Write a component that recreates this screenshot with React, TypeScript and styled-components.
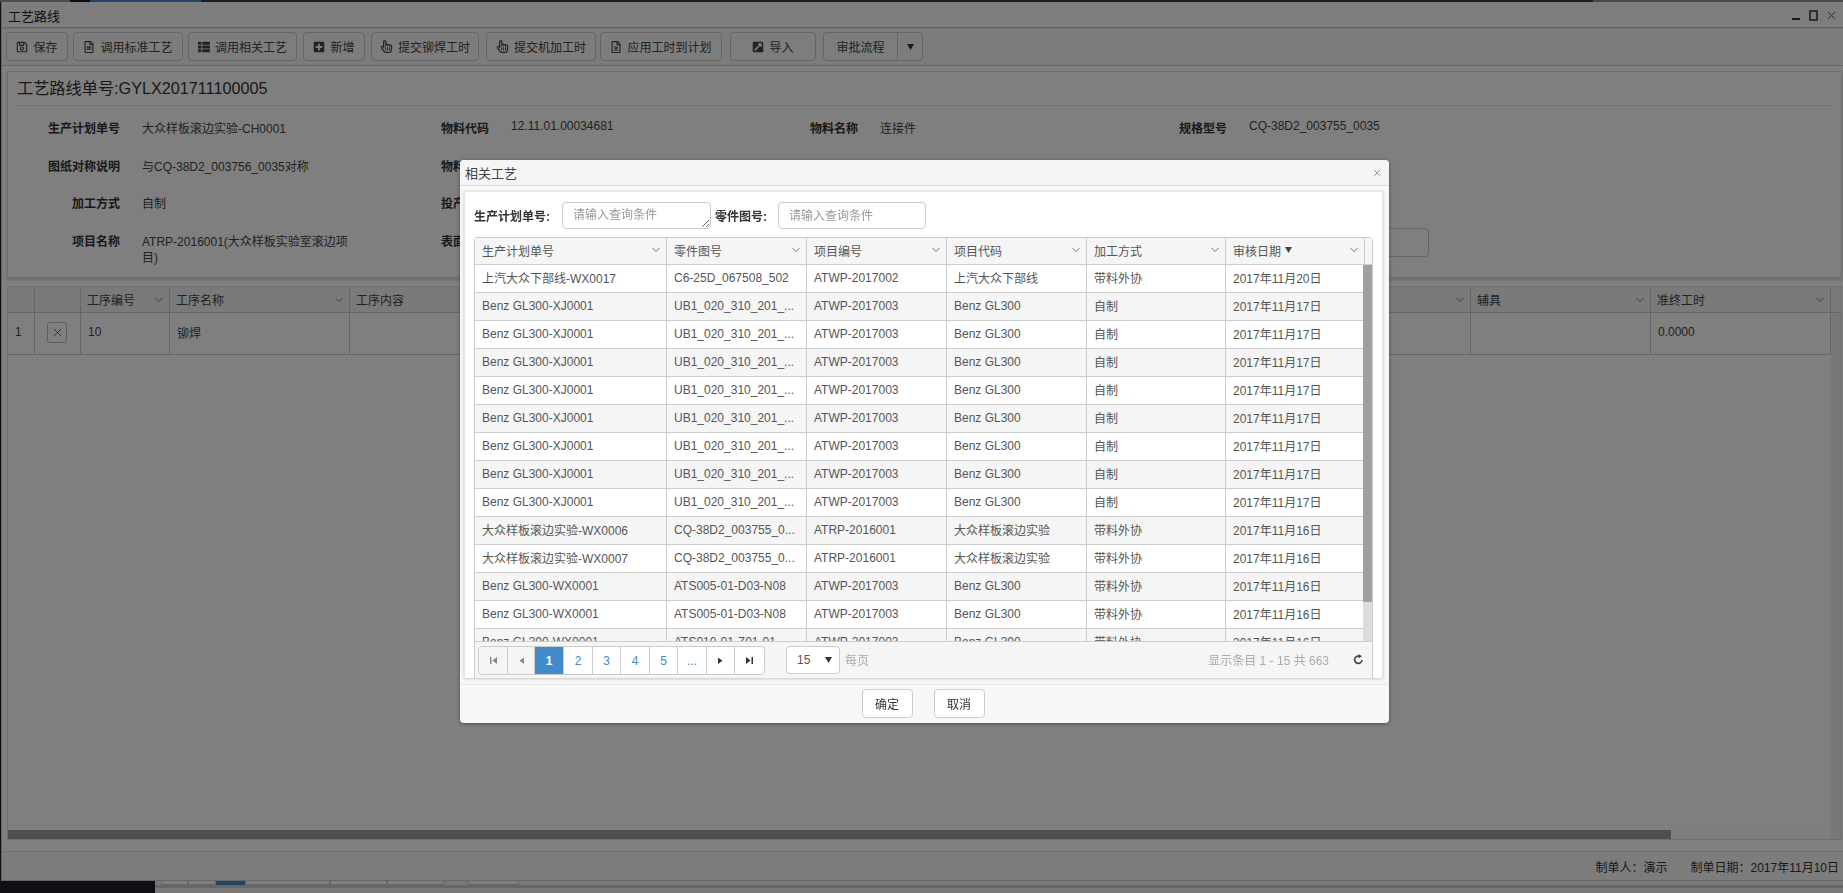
import React, { ReactElement } from 'react';
import styled, { createGlobalStyle } from 'styled-components';
import {
  FaRegSave,
  FaRegFileAlt,
  FaThList,
  FaPlusSquare,
  FaRegHandPointer,
  FaRegFileExcel,
  FaExternalLinkSquareAlt,
} from 'react-icons/fa';

const GlobalStyle = createGlobalStyle`
  html, body {
    margin: 0;
    padding: 0;
    width: 1843px;
    height: 893px;
    overflow: hidden;
    background: #1c1e24;
    font-family: "Liberation Sans", "Noto Sans CJK SC", sans-serif;
    font-size: 12px;
    color: #333;
  }
  * { box-sizing: border-box; }
`;

const Page = styled.div`
  width: 1843px;
  height: 893px;
  display: flex;
  flex-direction: column;
`;

const TopStrip = styled.div`
  height: 2px;
  display: flex;
  background: #3a3d48;
`;

const TopSegment = styled.div<{ $w: number; $c: string; $push?: boolean }>`
  width: ${(p) => p.$w}px;
  margin-left: ${(p) => (p.$push ? 'auto' : 0)};
  background: ${(p) => p.$c};
`;

const Window = styled.div`
  height: 879px;
  margin-left: 1px;
  display: flex;
  flex-direction: column;
  background: #fbfbfb;
  border-left: 1px solid #c8c8c8;
`;

const TitleBar = styled.div`
  height: 26px;
  flex: none;
  display: flex;
  align-items: center;
  justify-content: space-between;
  padding: 2px 7px 0 6px;
  font-size: 13px;
  border-bottom: 1px solid #ccc;
  color: #222;
`;

const WindowControls = styled.div`
  display: flex;
  align-items: center;
  gap: 9px;
  color: #333;
`;

const Toolbar = styled.div`
  height: 38px;
  flex: none;
  display: flex;
  align-items: center;
  padding: 0 0 1px 4px;
  border-top: 1px solid #e4e4e4;
  border-bottom: 1px solid #ccc;
  background: #f8f8f8;
`;

const ToolButton = styled.div<{ $w: number; $ml: number }>`
  width: ${(p) => p.$w}px;
  margin-left: ${(p) => p.$ml}px;
  height: 29px;
  display: flex;
  align-items: center;
  justify-content: center;
  gap: 5px;
  border: 1px solid #ccc;
  border-radius: 4px;
  background: #fafafa;
  color: #444;
  font-size: 12px;
  svg { font-size: 12px; }
`;

const HandIcon = styled(FaRegHandPointer)`
  && { font-size: 13px; }
`;

const SplitButton = styled.div`
  width: 100px;
  margin-left: 7px;
  height: 29px;
  display: flex;
  border: 1px solid #ccc;
  border-radius: 4px;
  background: #fafafa;
  color: #444;
`;

const SplitMain = styled.div`
  width: 74px;
  display: flex;
  align-items: center;
  justify-content: center;
  border-right: 1px solid #ccc;
`;

const SplitCaret = styled.div`
  flex: 1;
  display: flex;
  align-items: center;
  justify-content: center;
`;

const Content = styled.div`
  flex: 1;
  min-height: 0;
  display: flex;
  flex-direction: column;
  gap: 8px;
  padding: 5px 1px 11px 5px;
  background: #fff;
`;

const HeaderPanel = styled.div`
  height: 207px;
  flex: none;
  padding: 0 10px 0 9px;
  border: 1px solid #ddd;
  background: #fff;
  box-shadow: 0 2px 3px rgba(0, 0, 0, 0.15);
`;

const PanelTitle = styled.div`
  height: 34px;
  line-height: 33px;
  font-size: 16.2px;
  color: #333;
  border-bottom: 1px solid #e4e4e4;
`;

const FieldGrid = styled.div`
  display: grid;
  grid-template-columns: repeat(4, 369px);
  grid-auto-rows: 37.6px;
  padding: 4px 0 0 2px;
`;

const Field = styled.div`
  display: grid;
  grid-template-columns: 101px 208px;
  column-gap: 22px;
  align-items: start;
  padding-top: 11px;
  line-height: 16px;
`;

const FieldLabel = styled.div`
  text-align: right;
  font-weight: 700;
  color: #333;
`;

const FieldValue = styled.div<{ $raised?: boolean }>`
  color: #444;
  margin-top: ${(p) => (p.$raised ? -3 : 0)}px;
`;

const FieldInput = styled.div`
  height: 29px;
  width: 180px;
  margin-top: -6px;
  border: 1px solid #ccc;
  border-radius: 4px;
`;

const ProcessGrid = styled.div`
  flex: 1;
  min-height: 0;
  display: flex;
  flex-direction: column;
  border: 1px solid #ddd;
  border-top-left-radius: 3px;
`;

const PROCESS_COLUMNS = '27px 46px 89px 180px 221px 180px 180px 180px 180px 180px 180px 180px';

const ProcessHeader = styled.div`
  height: 26px;
  flex: none;
  display: grid;
  grid-template-columns: ${PROCESS_COLUMNS} 1fr;
  background: #f5f5f5;
  border-bottom: 1px solid #ccc;
`;

const ProcessHead = styled.div`
  display: flex;
  align-items: center;
  justify-content: space-between;
  padding: 0 6px;
  border-right: 1px solid #ccc;
  color: #444;
  &:last-child { border-right: none; }
`;

const ProcessBody = styled.div`
  flex: 1;
  min-height: 0;
  display: flex;
`;

const ProcessRows = styled.div`
  flex: 1;
`;

const ProcessTrack = styled.div`
  width: 10px;
  flex: none;
  background: #f0f0f0;
`;

const ProcessRow = styled.div`
  height: 42px;
  display: grid;
  grid-template-columns: ${PROCESS_COLUMNS};
  border-bottom: 1px solid #ccc;
`;

const ProcessCell = styled.div`
  display: flex;
  align-items: center;
  padding: 0 7px 3px;
  border-right: 1px solid #ccc;
  color: #444;
`;

const RemoveButton = styled.div`
  width: 20px;
  height: 21px;
  display: flex;
  align-items: center;
  justify-content: center;
  margin-left: 5px;
  border: 1px solid #bbb;
  border-radius: 3px;
`;

const BottomScroll = styled.div`
  height: 9px;
  flex: none;
  display: flex;
  background: #fdfdfd;
`;

const BottomThumb = styled.div`
  width: 1663px;
  background: #9e9e9e;
`;

const BottomCorner = styled.div`
  width: 10px;
  margin-left: auto;
  background: #f0f0f0;
`;

const StatusBar = styled.div`
  height: 30px;
  flex: none;
  display: flex;
  justify-content: flex-end;
  align-items: center;
  gap: 23px;
  padding: 0 4px 0 0;
  border-top: 1px solid #e0e0e0;
  border-bottom: 1px solid #ccc;
  background: #f8f8f8;
  color: #333;
`;

const BottomStrip = styled.div`
  height: 12px;
  display: flex;
  background: #f2f2f2;
`;

const BottomDark = styled.div`
  width: 155px;
  background: #1c1e24;
`;

const BottomRest = styled.div`
  flex: 1;
  height: 7px;
  display: flex;
  padding-left: 6px;
  border-bottom: 3px solid #ccc;
`;

const BottomTab = styled.div<{ $w: number; $active?: boolean; $ml?: number }>`
  width: ${(p) => p.$w}px;
  height: 4px;
  margin-left: ${(p) => p.$ml || 0}px;
  background: ${(p) => (p.$active ? '#428bca' : '#fff')};
  border: ${(p) => (p.$active ? 'none' : '1px solid #ccc')};
  border-top: none;
`;

const Overlay = styled.div`
  position: fixed;
  inset: 0;
  background: rgba(0, 0, 0, 0.5);
`;

const Modal = styled.div`
  position: fixed;
  left: 460px;
  top: 160px;
  width: 929px;
  height: 563px;
  display: flex;
  flex-direction: column;
  background: #f7f7f7;
  border-radius: 4px;
  box-shadow: 0 1px 4px rgba(0, 0, 0, 0.4);
`;

const ModalTitle = styled.div`
  height: 26px;
  flex: none;
  display: flex;
  align-items: center;
  justify-content: space-between;
  padding: 0 8px 0 5px;
  font-size: 13px;
  background: #f5f5f5;
  border-bottom: 1px solid #ddd;
  border-radius: 4px 4px 0 0;
  color: #444;
`;

const ModalPanel = styled.div`
  height: 487px;
  margin: 5px 6px 0 4px;
  flex: none;
  padding: 10px 9px 0 9px;
  display: flex;
  flex-direction: column;
  background: #fff;
  border: 1px solid #e4e4e4;
  border-bottom: none;
  box-shadow: 0 1px 3px rgba(0, 0, 0, 0.2);
`;

const SearchRow = styled.div`
  height: 27px;
  flex: none;
  display: flex;
  align-items: center;
`;

const SearchLabel = styled.label<{ $w: number }>`
  width: ${(p) => p.$w}px;
  font-weight: 700;
  font-size: 12px;
  color: #333;
  white-space: nowrap;
`;

const SearchArea = styled.textarea`
  width: 149px;
  height: 27px;
  margin: 0 4px 0 0;
  padding: 5px 10px;
  font: 12px "Liberation Sans", "Noto Sans CJK SC", sans-serif;
  line-height: 15px;
  color: #555;
  border: 1px solid #ccc;
  border-radius: 4px;
  outline: none;
  &::placeholder { color: #999; }
`;

const SearchInput = styled.input`
  width: 148px;
  height: 27px;
  padding: 0 10px;
  font: 12px "Liberation Sans", "Noto Sans CJK SC", sans-serif;
  color: #555;
  border: 1px solid #ccc;
  border-radius: 4px;
  outline: none;
  &::placeholder { color: #999; }
`;

const DataGrid = styled.div`
  margin-top: 8px;
  height: 441px;
  width: 899px;
  flex: none;
  display: flex;
  flex-direction: column;
  border: 1px solid #ccc;
  border-bottom: none;
  border-radius: 4px 4px 0 0;
`;

const COLUMNS = '192px 140px 140px 140px 139px 139px';

const GridHeader = styled.div`
  height: 27px;
  flex: none;
  display: grid;
  grid-template-columns: ${COLUMNS} 1fr;
  background: #f5f5f5;
  border-bottom: 1px solid #ccc;
`;

const HeadCell = styled.div`
  display: flex;
  align-items: center;
  justify-content: space-between;
  padding: 0 6px 2px 7px;
  border-right: 1px solid #ccc;
  color: #555;
  &:last-child { border-right: none; }
`;

const HeadText = styled.span`
  display: flex;
  align-items: center;
  gap: 4px;
`;

const GridBody = styled.div`
  flex: 1;
  min-height: 0;
  display: flex;
  overflow: hidden;
`;

const Rows = styled.div`
  flex: 1;
  overflow: hidden;
`;

const Row = styled.div<{ $alt: boolean }>`
  height: 28px;
  display: grid;
  grid-template-columns: ${COLUMNS};
  background: ${(p) => (p.$alt ? '#f5f5f5' : '#fff')};
  border-bottom: 1px solid #ccc;
`;

const Cell = styled.div`
  display: flex;
  align-items: center;
  padding: 0 7px 2px;
  color: #555;
  white-space: nowrap;
  overflow: hidden;
  border-right: 1px solid #ccc;
`;

const ScrollTrack = styled.div`
  width: 9px;
  flex: none;
  background: #dcdcdc;
`;

const ScrollThumb = styled.div`
  height: 337px;
  background: #a0a0a0;
`;

const Pager = styled.div`
  height: 37px;
  flex: none;
  display: flex;
  align-items: center;
  padding: 0 0 1px 3px;
  background: #f5f5f5;
  border-top: 1px solid #ccc;
`;

const PageButtons = styled.div`
  display: flex;
  height: 29px;
  margin-top: 2px;
  border: 1px solid #ccc;
  border-radius: 4px;
  background: #fff;
`;

const PageButton = styled.div<{ $w: number; $active?: boolean; $muted?: boolean }>`
  width: ${(p) => p.$w}px;
  display: flex;
  align-items: center;
  justify-content: center;
  font-size: 12px;
  color: ${(p) => (p.$active ? '#fff' : p.$muted ? '#888' : '#428bca')};
  background: ${(p) => (p.$active ? '#428bca' : p.$muted ? '#f5f5f5' : '#fff')};
  font-weight: ${(p) => (p.$active ? 700 : 400)};
  border-right: 1px solid #ccc;
  &:last-child { border-right: none; border-radius: 0 4px 4px 0; }
  &:first-child { border-radius: 4px 0 0 4px; }
`;

const PageSize = styled.div`
  width: 54px;
  height: 28px;
  margin-left: 21px;
  display: flex;
  align-items: center;
  justify-content: space-between;
  padding: 0 7px 0 10px;
  color: #555;
  background: #fff;
  border: 1px solid #ccc;
  border-radius: 4px;
`;

const PageLabel = styled.span`
  margin-left: 5px;
  color: #aaa;
`;

const PageInfo = styled.span`
  margin-left: auto;
  color: #aaa;
`;

const RefreshIcon = styled.span`
  display: flex;
  margin: 0 8px 0 24px;
`;

const ModalFooter = styled.div`
  flex: 1;
  display: flex;
  justify-content: center;
  gap: 21px;
  padding: 4px 3px 0 0;
  margin-top: 6px;
  border-top: 1px solid #e8e8e8;
`;

const FooterButton = styled.div`
  width: 51px;
  height: 29px;
  display: flex;
  align-items: center;
  justify-content: center;
  color: #333;
  background: #fff;
  border: 1px solid #ccc;
  border-radius: 4px;
`;

const Chevron = (): ReactElement => (
  <svg width="8" height="6" viewBox="0 0 8 6" fill="none" stroke="#777" strokeWidth="1">
    <path d="M0.5 1 L4 4.5 L7.5 1" />
  </svg>
);

const Cross = ({ size, color }: { size: number; color: string }): ReactElement => (
  <svg width={size} height={size} viewBox="0 0 10 10" fill="none" stroke={color} strokeWidth="1">
    <path d="M1 1 L9 9 M9 1 L1 9" />
  </svg>
);

const Triangle = ({ color = '#333' }: { color?: string }): ReactElement => (
  <svg width="7" height="6" viewBox="0 0 7 6" fill={color}>
    <path d="M0 0 H7 L3.5 6 Z" />
  </svg>
);

const PageArrow = ({ kind, color }: { kind: string; color: string }): ReactElement => {
  const paths: Record<string, string> = {
    first: 'M1 1 H2.5 V8 H1 Z M8 1 V8 L3.5 4.5 Z',
    prev: 'M7 1.5 V8 L2.5 4.7 Z',
    next: 'M2 1.5 V8 L6.5 4.7 Z',
    last: 'M1 1 V8 L5.5 4.5 Z M6.5 1 H8 V8 H6.5 Z',
  };
  return (
    <svg width="9" height="9" viewBox="0 0 9 9" fill={color}>
      <path d={paths[kind]} />
    </svg>
  );
};

const tools = [
  { text: '保存', icon: <FaRegSave />, w: 62, ml: 0 },
  { text: '调用标准工艺', icon: <FaRegFileAlt />, w: 110, ml: 5 },
  { text: '调用相关工艺', icon: <FaThList />, w: 109, ml: 5 },
  { text: '新增', icon: <FaPlusSquare />, w: 62, ml: 6 },
  { text: '提交铆焊工时', icon: <HandIcon />, w: 108, ml: 6 },
  { text: '提交机加工时', icon: <HandIcon />, w: 110, ml: 7 },
  { text: '应用工时到计划', icon: <FaRegFileExcel />, w: 122, ml: 4 },
  { text: '导入', icon: <FaExternalLinkSquareAlt />, w: 86, ml: 8 },
];

const fields = [
  { label: '生产计划单号', value: '大众样板滚边实验-CH0001' },
  { label: '物料代码', value: '12.11.01.00034681', raised: true },
  { label: '物料名称', value: '连接件' },
  { label: '规格型号', value: 'CQ-38D2_003755_0035', raised: true },
  { label: '图纸对称说明', value: '与CQ-38D2_003756_0035对称' },
  { label: '物料规格', value: '' },
  { label: '', value: '' },
  { label: '', value: '' },
  { label: '加工方式', value: '自制' },
  { label: '投产数量', value: '' },
  { label: '', value: '' },
  { label: '', value: '' },
  { label: '项目名称', value: 'ATRP-2016001(大众样板实验室滚边项目)' },
  { label: '表面处理', value: '' },
  { label: '', value: '' },
];

const processHeads = ['', '', '工序编号', '工序名称', '工序内容', '', '', '', '', '', '辅具', '准终工时'];

const XJ = ['Benz GL300-XJ0001', 'UB1_020_310_201_...', 'ATWP-2017003', 'Benz GL300', '自制', '2017年11月17日'];

const rows: string[][] = [
  ['上汽大众下部线-WX0017', 'C6-25D_067508_502', 'ATWP-2017002', '上汽大众下部线', '带料外协', '2017年11月20日'],
  XJ, XJ, XJ, XJ, XJ, XJ, XJ, XJ,
  ['大众样板滚边实验-WX0006', 'CQ-38D2_003755_0...', 'ATRP-2016001', '大众样板滚边实验', '带料外协', '2017年11月16日'],
  ['大众样板滚边实验-WX0007', 'CQ-38D2_003755_0...', 'ATRP-2016001', '大众样板滚边实验', '带料外协', '2017年11月16日'],
  ['Benz GL300-WX0001', 'ATS005-01-D03-N08', 'ATWP-2017003', 'Benz GL300', '带料外协', '2017年11月16日'],
  ['Benz GL300-WX0001', 'ATS005-01-D03-N08', 'ATWP-2017003', 'Benz GL300', '带料外协', '2017年11月16日'],
  ['Benz GL300-WX0001', 'ATS010-01-Z01-01', 'ATWP-2017003', 'Benz GL300', '带料外协', '2017年11月16日'],
];

const gridHeads = ['生产计划单号', '零件图号', '项目编号', '项目代码', '加工方式', '审核日期'];

const pages = [
  { w: 29, arrow: 'first' },
  { w: 27, arrow: 'prev' },
  { w: 29, text: '1', active: true },
  { w: 29, text: '2' },
  { w: 28, text: '3' },
  { w: 29, text: '4' },
  { w: 28, text: '5' },
  { w: 29, text: '...' },
  { w: 28, arrow: 'next' },
  { w: 29, arrow: 'last' },
];

function App(): ReactElement {
  return (
    <Page>
      <GlobalStyle />
      <TopStrip>
        <TopSegment $w={70} $c="#9a9a9a" />
        <TopSegment $w={20} $c="#1c1e24" />
        <TopSegment $w={111} $c="#428bca" />
        <TopSegment $w={250} $c="#8f8f98" $push />
      </TopStrip>
      <Window>
        <TitleBar>
          <span>工艺路线</span>
          <WindowControls>
            <svg width="8" height="10" viewBox="0 0 8 10" fill="#333"><rect x="0" y="7" width="8" height="2" /></svg>
            <svg width="9" height="11" viewBox="0 0 9 11" fill="none" stroke="#333" strokeWidth="1.5"><rect x="1" y="1" width="7" height="9" /></svg>
            <Cross size={9} color="#444" />
          </WindowControls>
        </TitleBar>
        <Toolbar>
          {tools.map((t) => (
            <ToolButton key={t.text} $w={t.w} $ml={t.ml}>
              {t.icon}
              <span>{t.text}</span>
            </ToolButton>
          ))}
          <SplitButton>
            <SplitMain>审批流程</SplitMain>
            <SplitCaret><Triangle /></SplitCaret>
          </SplitButton>
        </Toolbar>
        <Content>
          <HeaderPanel>
            <PanelTitle>工艺路线单号:GYLX201711100005</PanelTitle>
            <FieldGrid>
              {fields.map((f, i) => (
                <Field key={i}>
                  <FieldLabel>{f.label}</FieldLabel>
                  <FieldValue $raised={f.raised}>{f.value}</FieldValue>
                </Field>
              ))}
              <Field>
                <FieldLabel />
                <FieldInput />
              </Field>
            </FieldGrid>
          </HeaderPanel>
          <ProcessGrid>
            <ProcessHeader>
              {processHeads.map((h, i) => (
                <ProcessHead key={i}>
                  <span>{h}</span>
                  {i > 1 && <Chevron />}
                </ProcessHead>
              ))}
              <ProcessHead />
            </ProcessHeader>
            <ProcessBody>
              <ProcessRows>
                <ProcessRow>
                  {processHeads.map((_, i) => (
                    <ProcessCell key={i}>
                      {i === 0 && '1'}
                      {i === 1 && <RemoveButton><Cross size={9} color="#555" /></RemoveButton>}
                      {i === 2 && '10'}
                      {i === 3 && '铆焊'}
                      {i === 11 && '0.0000'}
                    </ProcessCell>
                  ))}
                </ProcessRow>
              </ProcessRows>
              <ProcessTrack />
            </ProcessBody>
            <BottomScroll>
              <BottomThumb />
              <BottomCorner />
            </BottomScroll>
          </ProcessGrid>
        </Content>
        <StatusBar>
          <span>制单人：演示</span>
          <span>制单日期：2017年11月10日</span>
        </StatusBar>
      </Window>
      <BottomStrip>
        <BottomDark />
        <BottomRest>
          <BottomTab $w={27} />
          <BottomTab $w={28} />
          <BottomTab $w={29} $active />
          <BottomTab $w={85} />
          <BottomTab $w={57} />
          <BottomTab $w={57} />
          <BottomTab $w={51} $ml={24} />
        </BottomRest>
      </BottomStrip>
      <Overlay />
      <Modal>
        <ModalTitle>
          <span>相关工艺</span>
          <Cross size={8} color="#888" />
        </ModalTitle>
        <ModalPanel>
          <SearchRow>
            <SearchLabel $w={88}>生产计划单号:</SearchLabel>
            <SearchArea placeholder="请输入查询条件" />
            <SearchLabel $w={63}>零件图号:</SearchLabel>
            <SearchInput placeholder="请输入查询条件" />
          </SearchRow>
          <DataGrid>
            <GridHeader>
              {gridHeads.map((h) => (
                <HeadCell key={h}>
                  <HeadText>
                    {h}
                    {h === '审核日期' && <Triangle color="#444" />}
                  </HeadText>
                  <Chevron />
                </HeadCell>
              ))}
              <HeadCell />
            </GridHeader>
            <GridBody>
              <Rows>
                {rows.map((r, i) => (
                  <Row key={i} $alt={i % 2 === 1}>
                    {r.map((c, j) => (
                      <Cell key={j}>{c}</Cell>
                    ))}
                  </Row>
                ))}
              </Rows>
              <ScrollTrack>
                <ScrollThumb />
              </ScrollTrack>
            </GridBody>
            <Pager>
              <PageButtons>
                {pages.map((p, i) => (
                  <PageButton key={i} $w={p.w} $active={p.active} $muted={i < 2}>
                    {p.arrow ? <PageArrow kind={p.arrow} color={i < 2 ? '#888' : '#333'} /> : p.text}
                  </PageButton>
                ))}
              </PageButtons>
              <PageSize>
                <span>15</span>
                <Triangle />
              </PageSize>
              <PageLabel>每页</PageLabel>
              <PageInfo>显示条目 1 - 15 共 663</PageInfo>
              <RefreshIcon>
                <svg width="11" height="11" viewBox="0 0 11 11" fill="none" stroke="#444" strokeWidth="1.6">
                  <path d="M9 6 A3.7 3.7 0 1 1 6.5 2.2" />
                  <path d="M5.5 0 L9 2.3 L5.5 4.4 Z" fill="#444" stroke="none" />
                </svg>
              </RefreshIcon>
            </Pager>
          </DataGrid>
        </ModalPanel>
        <ModalFooter>
          <FooterButton>确定</FooterButton>
          <FooterButton>取消</FooterButton>
        </ModalFooter>
      </Modal>
    </Page>
  );
}

export default App;
